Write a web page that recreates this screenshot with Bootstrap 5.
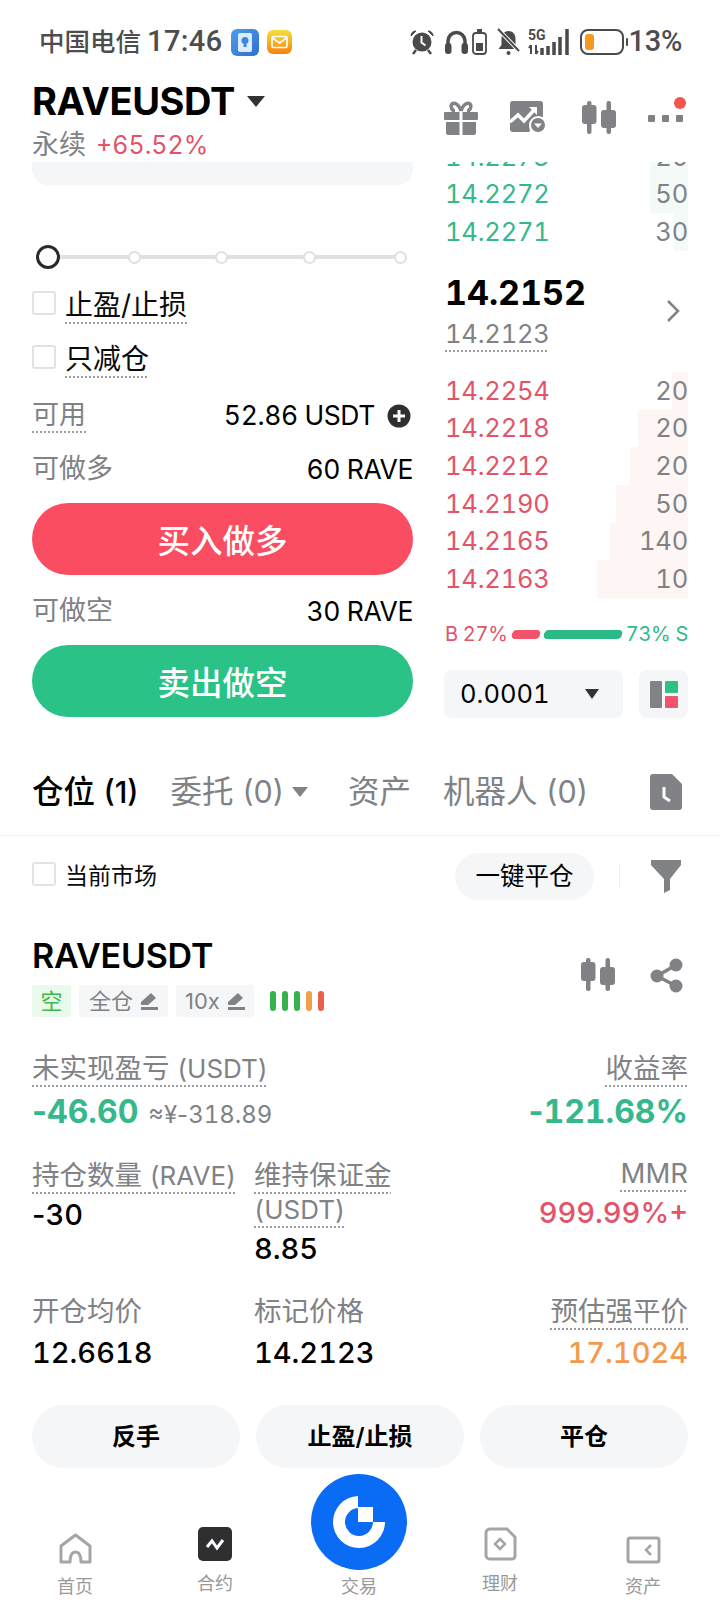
<!DOCTYPE html>
<html lang="zh">
<head>
<meta charset="utf-8">
<link href="https://cdn.jsdelivr.net/npm/bootstrap@5.3.0/dist/css/bootstrap.min.css" rel="stylesheet">
<style>
:root{--g:#808285;--up:#35b88b;--dn:#e25468;--soft:#f5f6f7}
body{width:720px;height:1610px;overflow:hidden;font-family:Inter,"Noto Sans CJK SC",sans-serif;font-variant-numeric:tabular-nums;color:#0a0a0a;background:#fff}
.shell{padding:0 32px}
.status{height:84px;padding:0 38px 0 39px;font-family:Roboto,"Noto Sans CJK SC",sans-serif;font-size:25.5px;font-weight:500;color:#4d4d4d}
.status svg{display:block}
.clock{font-size:29px;margin-left:6px;letter-spacing:.4px}
.pct{font-size:29px;margin-left:1px;letter-spacing:-.3px}
.head{height:78px}
.ttl{font-size:38px;font-weight:700;line-height:34px;height:42px;letter-spacing:-.4px;color:#000}
.sub{font-size:27px;line-height:38px;color:var(--g)}
.sub b{font-weight:400;font-size:25px;color:var(--dn);margin-left:10px}
.htools{padding-top:17px;gap:32px;position:relative;margin-right:5px}
.htools .shft{margin-right:3px}
.reddot{position:absolute;right:-3px;top:-4px;width:12px;height:12px;border-radius:50%;background:#f2564a}
.trade{height:586px;gap:32px}
.lcol{width:381px}
.rcol{flex:1;min-width:0}
.boxcut{height:23px;background:var(--soft);border-radius:0 0 16px 16px}
.slider{margin:61px 0 10px;height:22px;padding:0 12px 0 16px;position:relative}
.slider:before{content:"";position:absolute;left:16px;right:12px;top:9px;height:4px;background:#dfe0e1}
.thumb{width:13px;height:13px;border:2px solid #dfe0e1;background:#fff;border-radius:50%;position:relative}
.thumb0{width:24px;height:24px;border:3.5px solid #2a2a2a;margin-left:-12px;margin-right:auto}
.thumbs{height:22px}
.chk{height:54px;font-size:28px;gap:9px}
.chk .form-check-input,.cur .form-check-input{width:24px;height:24px;margin:-4px 0 0;border:2px solid #e2e3e4;border-radius:3px;flex:none}
.dash{text-decoration:underline dotted #9a9c9f 2px;text-underline-offset:7px;text-decoration-skip-ink:none}
.ln{font-size:27px;color:var(--g);padding-top:3px}
.ln strong{font-weight:400;font-size:26.5px;color:#000;letter-spacing:-.4px}
.avail{margin-right:2px}
.avail svg{margin-left:12px}
.h56{height:56px}.h52{height:52px}.h70{height:70px}
.act{height:72px;font-size:32.5px;font-weight:500;color:#fff;border:0;display:flex;align-items:center;justify-content:center;padding-top:12px;padding-bottom:6px;--bs-btn-color:#fff;--bs-btn-hover-color:#fff}
.buy{background:#fa4d61;margin-top:9px}.buy:hover{background:#fa4d61}
.sell{background:#2bc287}.sell:hover{background:#2bc287}
.bookclip{height:89px;overflow:hidden}
.bookin{margin-top:-24px}
.lvl{height:37.7px;font-size:25.5px;position:relative;letter-spacing:-.2px}
.lvl span{position:relative}
.lvl i{position:absolute;right:0;top:0;bottom:0}
.lvl em{font-style:normal;color:var(--g)}
.ask{color:var(--up)}.ask i{background:#f3faf7}
.bid{color:var(--dn)}.bid i{background:#fdf6f4}
.mid{height:121px;padding-top:22px}
.lastp{font-size:34px;font-weight:700;line-height:40px;color:#000}
.markp{font-size:25.5px;line-height:42px;color:var(--g);letter-spacing:-.2px}
.chev{margin-top:26px;margin-right:7px}
.depthr{margin-top:26px;height:20px;font-size:20px;gap:4px;letter-spacing:-.3px}
.depthr .rb{color:var(--dn)}.depthr .gs{color:var(--up)}
.rbar{height:9px;border-radius:4px}
.rbar1{width:28px;background:#f2546a;transform:skewX(-14deg)}
.rbar2{flex:1;background:#2bb985;transform:skewX(-14deg)}
.tick{margin-top:26px;height:48px;gap:16px}
.tsel{width:179px;margin-left:-1px;padding:0 24px 0 16px;background:var(--soft);border-radius:8px;font-size:25.5px;color:#000}
.tic2{flex:1;background:var(--soft);border-radius:8px}
.tri{width:0;height:0;border-left:7px solid transparent;border-right:7px solid transparent;border-top:10px solid #333}
.tabs{height:88px;border-bottom:1px solid #eeeff0;font-size:31.5px;color:var(--g);font-variant-numeric:normal}
.tabs .on{color:#000;font-weight:500}
.nm{font-size:30.5px}
.t2{margin-left:32px}.t3{margin-left:40px}.t4{margin-left:32px}
.tdoc{margin-left:auto;margin-right:6px}
.cur{height:80px}
.cur label{font-size:23px;margin-left:9px}
.pilly{--bs-btn-padding-y:0;--bs-btn-padding-x:0;width:139px;height:47px;background:var(--soft);font-size:24.5px;color:#000;border:0}
.vsep{width:1px;height:22px;background:#ecedee;margin:0 31px 0 25px}
.fnl{margin-right:7px}
.pos{margin-top:20px;height:40px;font-size:34px;font-weight:600;line-height:40px;letter-spacing:-.2px;color:#000}
.posic{gap:35px;margin-top:22px;margin-right:5px}
.tags{margin-top:9px;height:32px;gap:8px;font-size:22px;color:var(--g)}
.tg{height:32px;background:var(--soft);border-radius:3px;padding:0 8px;display:flex;align-items:center;gap:7px}
.tg.wd{padding:0 10px}
.tg.nr{padding:0 9px;font-size:22px;font-variant-numeric:normal}
.tg.sh{background:#e9f9eb;color:#3cbb4a;width:39px;justify-content:center;padding:0}
.lev{gap:6px;margin-left:8px}
.lev u{display:block;width:6px;height:20px;border-radius:3px}
.st{font-size:27.5px;line-height:35px;color:var(--g)}
.st.tight{line-height:34px}
.lat{font-size:26px}
.c1{width:222px;flex:none}
.c2{flex:1}
.c3{text-align:right;flex:none}
.sv{font-size:29px;line-height:36px;color:#000;font-weight:500}
.mns{font-variant-numeric:normal}
.big{font-size:32px;font-weight:700;color:var(--up);line-height:36px;margin-top:8px}
.big small{font-size:24px;font-weight:400;color:var(--g);margin-left:10px}
.r1{margin-top:34px}.r2{margin-top:25px;height:109px}.r3{margin-top:27px}
.r3 .sv{margin-top:6px}
.mmr{margin-top:-2px}
.mmrv{color:var(--dn);margin-top:4px}
.acts{margin-top:34px;gap:16px}
.gbtn{--bs-btn-padding-y:0;height:63px;flex:1;background:var(--soft);border:0;font-size:24px;font-weight:600;color:#000;display:flex;align-items:center;justify-content:center}
.tabbar{height:142px;font-size:18px;color:#999}
.tb{width:144px;height:142px;padding-bottom:11px}
.tb span{line-height:24px;margin-top:11px}
.tb.up{padding-bottom:14px}
.fab{width:96px;height:96px;border-radius:50%;background:#0a6cf5;margin-top:6px}
.fab + span{margin-top:5px}
</style>
</head>
<body>
<div class="status d-flex align-items-center">
  <span>中国电信</span><span class="clock">17:46</span>
  <svg class="ms-2" width="28" height="27" viewBox="0 0 28 27"><defs><linearGradient id="bl" x1="0" y1="0" x2="1" y2="1"><stop offset="0" stop-color="#4f9cec"/><stop offset="1" stop-color="#2f6fd0"/></linearGradient></defs><rect width="28" height="27" rx="6" fill="url(#bl)"/><rect x="7" y="4" width="14" height="19" rx="2" fill="#dcecfb"/><circle cx="14" cy="11.500" r="3.500" fill="#3d86e0"/><rect x="12.500" y="15" width="3" height="3" fill="#3d86e0"/></svg>
  <svg class="ms-2" width="25" height="24" viewBox="0 0 25 24"><defs><linearGradient id="ye" x1="0" y1="0" x2="0" y2="1"><stop offset="0" stop-color="#f4df3a"/><stop offset="1" stop-color="#f7820d"/></linearGradient></defs><rect width="25" height="24" rx="6" fill="url(#ye)"/><rect x="5" y="6.500" width="15" height="11" rx="1.500" fill="none" stroke="#fff" stroke-width="1.600"/><path d="M5.500 8l7 5 7-5" fill="none" stroke="#fff" stroke-width="1.600"/></svg>
  <div class="ms-auto d-flex align-items-center">
    <svg width="24" height="26" viewBox="0 0 24 26"><circle cx="12" cy="13" r="9.500" fill="#4a4a4a"/><path d="M11.500 7v6.500l4 3" fill="none" stroke="#fff" stroke-width="2"/><path d="M1 7c0-3 2-5 5-5zM23 7c0-3-2-5-5-5z" fill="#4a4a4a" stroke="#4a4a4a"/><path d="M6 21l-3 4M18 21l3 4" stroke="#4a4a4a" stroke-width="2.500"/></svg>
    <svg style="margin-left:11px" width="23" height="24" viewBox="0 0 23 24"><path d="M3 19V11a8.500 8.500 0 0 1 17 0v8" fill="none" stroke="#4a4a4a" stroke-width="3.500"/><rect x="0" y="13" width="6.500" height="11" rx="3" fill="#4a4a4a"/><rect x="16.500" y="13" width="6.500" height="11" rx="3" fill="#4a4a4a"/></svg>
    <svg style="margin-left:4px" width="15" height="26" viewBox="0 0 15 26"><rect x="1" y="4" width="13" height="21" rx="3" fill="none" stroke="#4a4a4a" stroke-width="1.800"/><rect x="5" y="0" width="5" height="3" fill="#4a4a4a"/><rect x="4" y="14" width="7" height="8" fill="#4a4a4a"/></svg>
    <svg style="margin-left:10px" width="23" height="28" viewBox="0 0 23 28"><path d="M11.500 3c-5 0-7 4-7 8v6l-3 4h20l-3-4v-6c0-4-2-8-7-8z" fill="#4a4a4a"/><circle cx="11.500" cy="25" r="2" fill="#4a4a4a"/><path d="M1 1l21 22" stroke="#fff" stroke-width="4"/><path d="M1 1l21 22" stroke="#4a4a4a" stroke-width="2"/></svg>
    <svg style="margin-left:8px" width="42" height="28" viewBox="0 0 42 28"><text x="0" y="12" font-size="14" font-weight="700" fill="#4a4a4a" font-family="Roboto">5G</text><path d="M3 26v-9M1 20l2-3M8 17v9M10 23l-2 3M2 22h0" stroke="#4a4a4a" stroke-width="2" fill="none"/><path d="M14 27V20M20 27V18M26 27V14M32 27V9M39 27V1" stroke="#4a4a4a" stroke-width="3.500" fill="none"/></svg>
    <svg style="margin-left:10px" width="48" height="26" viewBox="0 0 48 26"><rect x="1" y="1" width="42" height="24" rx="7" fill="none" stroke="#4a4a4a" stroke-width="2"/><rect x="5" y="5" width="9" height="16" rx="3" fill="#f29b1d"/><rect x="46" y="9" width="2" height="8" rx="1" fill="#4a4a4a"/></svg>
    <span class="pct">13%</span>
  </div>
</div>

<div class="shell">
  <div class="head d-flex justify-content-between">
    <div>
      <div class="ttl d-flex">RAVEUSDT<span class="tri" style="margin-left:12px;border-left-width:9px;border-right-width:9px;border-top-width:11px;margin-top:12px"></span></div>
      <div class="sub">永续<b>+65.52%</b></div>
    </div>
    <div class="htools d-flex align-items-start">
      <svg width="34" height="34" viewBox="0 0 34 34"><path d="M1 11h14.500v8H1a1 1 0 0 1-1-1v-6a1 1 0 0 1 1-1zM18.500 11H33a1 1 0 0 1 1 1v6a1 1 0 0 1-1 1H18.500zM2 21h13.500v13H4a2 2 0 0 1-2-2zM18.500 21H32v11a2 2 0 0 1-2 2H18.500z" fill="#808285"/><path d="M17 10C15 3 10 1 8 3c-2 2 0 7 3 7M17 10c2-7 7-9 9-7 2 2 0 7-3 7" fill="none" stroke="#808285" stroke-width="3.500"/></svg>
      <svg class="shft" width="37" height="33" viewBox="0 0 37 33"><path d="M3 0h27a3 3 0 0 1 3 3v13a11 11 0 0 0-13 14l-1 1H3a3 3 0 0 1-3-3V3a3 3 0 0 1 3-3z" fill="#808285"/><path d="M0 21l8-7 6 6 11-12" fill="none" stroke="#fff" stroke-width="3.500"/><path d="M19 6h8v8z" fill="#fff"/><circle cx="28" cy="24" r="9" fill="#fff"/><circle cx="28" cy="24" r="7" fill="#808285"/><path d="M24 22.500h8l-4 4.500z" fill="#fff"/></svg>
      <svg width="34" height="33" viewBox="0 0 34 33"><use href="#cdl"/></svg>
      <div class="position-relative" style="width:35px;height:33px">
        <svg width="35" height="33" viewBox="0 0 35 33"><rect x="0" y="14" width="7" height="7" rx="1" fill="#808285"/><rect x="14" y="14" width="7" height="7" rx="1" fill="#808285"/><rect x="28" y="14" width="7" height="7" rx="1" fill="#808285"/></svg>
        <span class="reddot"></span>
      </div>
    </div>
  </div>

  <svg width="0" height="0" class="position-absolute"><defs><symbol id="cdl" viewBox="0 0 34 33"><rect x="0" y="4" width="14.500" height="19" rx="3" fill="#808285"/><rect x="5" y="0" width="4.500" height="33" rx="2" fill="#808285"/><rect x="19" y="9" width="15" height="18" rx="3" fill="#808285"/><rect x="24.500" y="0" width="4.500" height="33" rx="2" fill="#808285"/></symbol></defs></svg>

  <div class="trade d-flex">
    <div class="lcol">
      <div class="boxcut"></div>
      <div class="slider">
        <div class="thumbs d-flex align-items-center justify-content-between">
          <span class="thumb thumb0"></span>
          <span class="thumb" style="margin-left:61px"></span>
          <span class="thumb" style="margin-left:74px"></span>
          <span class="thumb" style="margin-left:75px"></span>
          <span class="thumb" style="margin-left:78px;margin-right:-6px"></span>
        </div>
      </div>
      <div class="chk d-flex align-items-center"><input class="form-check-input" type="checkbox" aria-label="止盈/止损"><span class="dash">止盈/止损</span></div>
      <div class="chk d-flex align-items-center"><input class="form-check-input" type="checkbox" aria-label="只减仓"><span class="dash">只减仓</span></div>
      <div class="ln h56 d-flex align-items-center justify-content-between"><span class="dash">可用</span><span class="avail d-flex align-items-center"><strong>52.86 USDT</strong><svg width="24" height="24" viewBox="0 0 24 24"><circle cx="12" cy="12" r="11.500" fill="#2f2f32"/><path d="M12 6v12M6 12h12" stroke="#fff" stroke-width="3"/></svg></span></div>
      <div class="ln h52 d-flex align-items-center justify-content-between"><span>可做多</span><strong>60 RAVE</strong></div>
      <button class="btn act buy rounded-pill w-100">买入做多</button>
      <div class="ln h70 d-flex align-items-center justify-content-between"><span>可做空</span><strong>30 RAVE</strong></div>
      <button class="btn act sell rounded-pill w-100">卖出做空</button>
    </div>

    <div class="rcol">
      <div class="bookclip"><div class="bookin">
        <div class="lvl ask d-flex align-items-center justify-content-between"><i style="width:38px"></i><span>14.2273</span><em class="position-relative">20</em></div>
        <div class="lvl ask d-flex align-items-center justify-content-between"><i style="width:38px"></i><span>14.2272</span><em class="position-relative">50</em></div>
        <div class="lvl ask d-flex align-items-center justify-content-between"><i style="width:14px"></i><span>14.2271</span><em class="position-relative">30</em></div>
      </div></div>
      <div class="mid d-flex justify-content-between">
        <div><div class="lastp">14.2152</div><div class="markp"><span class="dash">14.2123</span></div></div>
        <svg class="chev" width="16" height="24" viewBox="0 0 16 24"><path d="M3 2l10 10L3 22" fill="none" stroke="#808285" stroke-width="2.500"/></svg>
      </div>
      <div class="lvl bid d-flex align-items-center justify-content-between"><i style="width:16px"></i><span>14.2254</span><em class="position-relative">20</em></div>
      <div class="lvl bid d-flex align-items-center justify-content-between"><i style="width:50px"></i><span>14.2218</span><em class="position-relative">20</em></div>
      <div class="lvl bid d-flex align-items-center justify-content-between"><i style="width:58px"></i><span>14.2212</span><em class="position-relative">20</em></div>
      <div class="lvl bid d-flex align-items-center justify-content-between"><i style="width:72px"></i><span>14.2190</span><em class="position-relative">50</em></div>
      <div class="lvl bid d-flex align-items-center justify-content-between"><i style="width:78px"></i><span>14.2165</span><em class="position-relative">140</em></div>
      <div class="lvl bid d-flex align-items-center justify-content-between"><i style="width:91px"></i><span>14.2163</span><em class="position-relative">10</em></div>
      <div class="depthr d-flex align-items-center"><span class="rb">B 27%</span><span class="rbar rbar1"></span><span class="rbar rbar2"></span><span class="gs">73% S</span></div>
      <div class="tick d-flex">
        <div class="tsel d-flex align-items-center justify-content-between"><span>0.0001</span><span class="tri"></span></div>
        <div class="tic2 d-flex align-items-center justify-content-center"><svg width="28" height="27" viewBox="0 0 28 27"><rect width="12" height="27" rx="1" fill="#808285"/><rect x="15" width="13" height="12" rx="1" fill="#2bc287"/><rect x="15" y="15" width="13" height="12" rx="1" fill="#f2546a"/></svg></div>
      </div>
    </div>
  </div>
</div>

<div class="tabs shell d-flex align-items-center">
  <span class="on">仓位 <span class="nm">(1)</span></span>
  <span class="t2 d-flex align-items-center"><span>委托 <span class="nm">(0)</span></span><span class="tri ms-2" style="border-top-color:#808285;border-left-width:8px;border-right-width:8px"></span></span>
  <span class="t3">资产</span>
  <span class="t4">机器人 <span class="nm">(0)</span></span>
  <svg class="tdoc" width="32" height="36" viewBox="0 0 32 36"><path d="M3 0h19l10 10v23a3 3 0 0 1-3 3H3a3 3 0 0 1-3-3V3a3 3 0 0 1 3-3z" fill="#808285"/><path d="M14 13v10l6 4" fill="none" stroke="#fff" stroke-width="3"/></svg>
</div>

<div class="shell">
  <div class="cur d-flex align-items-center">
    <input class="form-check-input" type="checkbox" id="cm"><label for="cm">当前市场</label>
    <button class="btn pilly rounded-pill ms-auto">一键平仓</button>
    <span class="vsep"></span>
    <svg class="fnl" width="30" height="33" viewBox="0 0 30 33"><path d="M0 0h30v5L19 19v11l-6 3V19L0 5z" fill="#808285"/></svg>
  </div>
  <div class="pos d-flex justify-content-between align-items-start">
    <span>RAVEUSDT</span>
    <span class="posic d-flex">
      <svg width="34" height="33" viewBox="0 0 34 33"><use href="#cdl"/></svg>
      <svg width="33" height="35" viewBox="0 0 33 35"><circle cx="26" cy="7" r="6.500" fill="#808285"/><circle cx="7" cy="18" r="6.500" fill="#808285"/><circle cx="26" cy="28" r="6.500" fill="#808285"/><path d="M26 7L7 18l19 10" fill="none" stroke="#808285" stroke-width="3.500"/></svg>
    </span>
  </div>
  <div class="tags d-flex align-items-center">
    <span class="tg sh">空</span>
    <span class="tg wd">全仓<svg width="18" height="18" viewBox="0 0 18 18"><path d="M11 1l5 5-8 7H1v-3zM1 15h17v3H1z" fill="#808285"/></svg></span>
    <span class="tg nr">10x<svg width="18" height="18" viewBox="0 0 18 18"><path d="M11 1l5 5-8 7H1v-3zM1 15h17v3H1z" fill="#808285"/></svg></span>
    <span class="lev d-flex"><u style="background:#36b24a"></u><u style="background:#36b24a"></u><u style="background:#36b24a"></u><u style="background:#f0a04a"></u><u style="background:#e8604f"></u></span>
  </div>

  <div class="r1 d-flex justify-content-between">
    <div><div class="st"><span class="dash">未实现盈亏 <span class="lat">(USDT)</span></span></div><div class="big"><span class="mns">-</span>46.60<small>≈¥<span class="mns">-</span>318.89</small></div></div>
    <div class="c3"><div class="st"><span class="dash">收益率</span></div><div class="big"><span class="mns">-</span>121.68%</div></div>
  </div>
  <div class="r2 d-flex">
    <div class="c1"><div class="st"><span class="dash">持仓数量 <span class="lat">(RAVE)</span></span></div><div class="sv mt-1"><span class="mns">-</span>30</div></div>
    <div class="c2"><div class="st tight"><span class="dash">维持保证金<br><span class="lat">(USDT)</span></span></div><div class="sv mt-1">8.85</div></div>
    <div class="c3 mmr"><div class="st"><span class="dash">MMR</span></div><div class="sv mmrv">999.99%+</div></div>
  </div>
  <div class="r3 d-flex">
    <div class="c1"><div class="st">开仓均价</div><div class="sv">12.6618</div></div>
    <div class="c2"><div class="st">标记价格</div><div class="sv">14.2123</div></div>
    <div class="c3"><div class="st"><span class="dash">预估强平价</span></div><div class="sv" style="color:#f29a4d">17.1024</div></div>
  </div>
  <div class="acts d-flex">
    <button class="btn gbtn rounded-pill">反手</button>
    <button class="btn gbtn rounded-pill">止盈/止损</button>
    <button class="btn gbtn rounded-pill">平仓</button>
  </div>
</div>

<div class="tabbar d-flex">
  <div class="tb d-flex flex-column align-items-center justify-content-end" style="margin-left:3px"><svg width="33" height="31" viewBox="0 0 33 31"><path d="M2 29V13L16.500 2 31 13v16H22c0-6-2-10-5.500-10S11 23 11 29z" fill="none" stroke="#a5a5a5" stroke-width="3" stroke-linejoin="round"/></svg><span>首页</span></div>
  <div class="tb up d-flex flex-column align-items-center justify-content-end" style="margin-left:-4px"><svg width="34" height="34" viewBox="0 0 34 34"><rect width="34" height="34" rx="5" fill="#2f2f32"/><path d="M9 20l5-6 5 7 6-8" fill="none" stroke="#fff" stroke-width="3"/></svg><span>合约</span></div>
  <div class="tb d-flex flex-column align-items-center justify-content-end"><div class="fab d-flex align-items-center justify-content-center"><svg width="96" height="96" viewBox="0 0 96 96"><path d="M47 22A26 26 0 1 0 74 48H62A14 14 0 1 1 47 34Z" fill="#fff"/><rect x="47" y="33" width="15" height="15" fill="#fff"/></svg></div><span>交易</span></div>
  <div class="tb up d-flex flex-column align-items-center justify-content-end" style="margin-left:-3px"><svg width="33" height="34" viewBox="0 0 33 34"><path d="M6 2h17l8 8v19a3 3 0 0 1-3 3H6a4 4 0 0 1-4-3V6a4 4 0 0 1 4-4z" fill="none" stroke="#a5a5a5" stroke-width="3"/><path d="M16 12l5 5-5 5-5-5z" fill="none" stroke="#a5a5a5" stroke-width="2.500"/></svg><span>理财</span></div>
  <div class="tb d-flex flex-column align-items-center justify-content-end" style="margin-left:-1px"><svg width="35" height="28" viewBox="0 0 35 28"><rect x="2" y="2" width="31" height="24" rx="2" fill="none" stroke="#a5a5a5" stroke-width="3"/><path d="M25 9l-5 5 5 5" fill="none" stroke="#a5a5a5" stroke-width="2.500"/></svg><span>资产</span></div>
</div>
<script src="https://cdn.jsdelivr.net/npm/bootstrap@5.3.0/dist/js/bootstrap.bundle.min.js"></script>
</body>
</html>
